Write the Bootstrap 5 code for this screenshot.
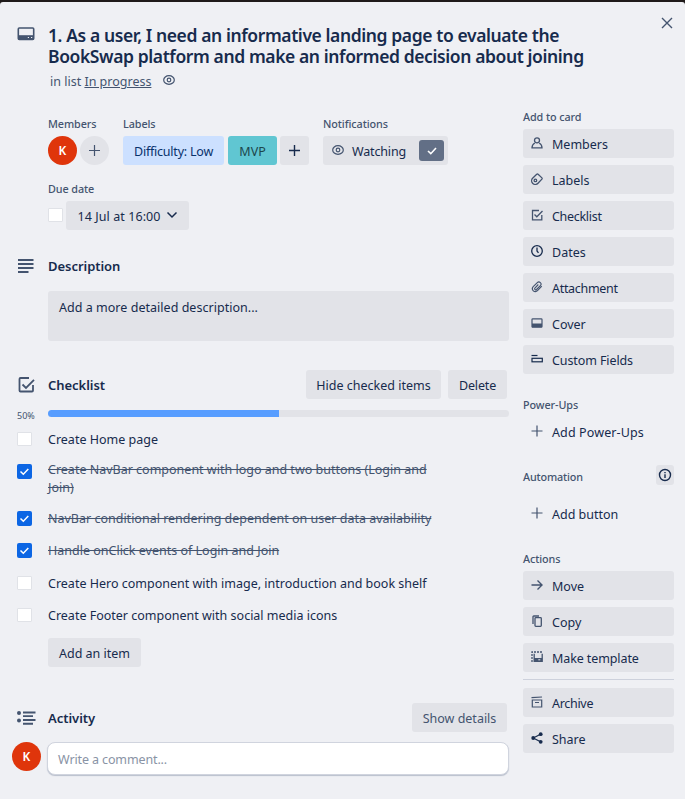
<!DOCTYPE html>
<html lang="en">
<head>
<meta charset="utf-8">
<meta name="viewport" content="width=device-width, initial-scale=1">
<title>Card details</title>
<link href="https://cdn.jsdelivr.net/npm/bootstrap@5.3.0/dist/css/bootstrap.min.css" rel="stylesheet">
<style>
  body { background: #1f1a1a; font: 400 12.5px/18px "Noto Sans", "Open Sans", sans-serif; color: #172b4d; padding-top: 2px; overflow: hidden; }
  .dialog { background: #eff0f4; height: 797px; border-radius: 3px 3px 0 0; padding: 0 11px 0 12px; }
  svg { display: block; flex: none; color: #44546f; fill: none; stroke: currentColor; }
  .solid { fill: currentColor; stroke: none; }
  .dialog-head { height: 109px; padding: 23px 0 0 5px; }
  .dialog-head > svg { margin: 2px 13px 0 0; }
  .card-title-text { font-size: 17.5px; line-height: 21px; font-weight: 600; letter-spacing: -.4px; margin: 0; white-space: nowrap; }
  .card-title-text span { display: block; }
  .in-list { color: #44546f; margin: 6px 0 0 2px; height: 18px; }
  .in-list a { color: inherit; }
  .in-list svg { margin: 1px 0 0 12px; }
  .close-x { background: none; border: 0; padding: 0; margin: -9px 0 0; height: 14px; }
  .main-col { width: 497px; }
  .side-col { width: 151px; }
  .indent { padding-left: 36px; }
  .facts { padding-top: 5px; }
  .fact-members { width: 75px; }
  .fact-labels { width: 200px; }
  .due { padding-top: 16px; }
  .tiny-title { font-size: 10.8px; line-height: 16px; font-weight: 500; color: #44546f; letter-spacing: -.08px; margin: 0; }
  .gray-btn { background: #e2e3e8; color: #172b4d; border: 0; border-radius: 3px; height: 29px; font: inherit; line-height: 18px; padding: 2px 0 0; display: flex; align-items: center; justify-content: center; white-space: nowrap; }
  .gap-3px { gap: 3px; }
  .avatar { width: 29px; height: 29px; border-radius: 50%; background: #df350b; color: #fff; font-weight: 600; font-size: 12px; display: flex; align-items: center; justify-content: center; flex: none; }
  .avatar-add { background: #e2e3e8; }
  .label-blue { background: #cce0ff; color: #09326c; width: 101px; letter-spacing: -.22px; margin-right: 1px; }
  .label-teal { background: #60c6d2; color: #1d474c; width: 49px; }
  .add-label { width: 29px; padding: 0; }
  .watch-btn { width: 125px; padding: 0; }
  .watch-btn > svg { margin: -1px 8px 0 0; }
  .watch-text { letter-spacing: -.15px; padding-top: 2px; }
  .watch-check { background: #626f86; width: 25px; height: 21px; border-radius: 3px; display: flex; align-items: center; justify-content: center; margin: 0 -5px 0 13px; }
  .watch-check svg, .tick.on svg { color: #fff; }
  .due-btn { width: 123px; letter-spacing: .08px; }
  .due-btn svg { margin: -3px 0 0 5px; }
  .due .tick { margin-top: -1px; }
  .tick { width: 15px; height: 14px; background: #fff; border: 1px solid #e0e2e7; flex: none; border-radius: 1px; }
  .tick.on { height: 15px; border: 0; border-radius: 2px; background: #0c66e4; }
  .description { padding-top: 21px; }
  .sect { display: flex; align-items: center; height: 29px; padding-left: 5px; }
  .sect h3 { font-size: 13px; line-height: 18px; font-weight: 600; margin: 0; letter-spacing: -.04px; }
  .sect-icon { width: 31px; flex: none; }
  .desc-box { background: #e2e3e8; border-radius: 3px; height: 50px; margin: 11px 0 29px 36px; padding: 8px 11px; letter-spacing: .03px; }
  .hide-btn { width: 135px; }
  .delete-btn { width: 59px; margin: 0 2px 0 7px; letter-spacing: -.15px; }
  .bar-row { height: 7px; margin-top: 11px; margin-bottom: 14px; }
  .pct { width: 36px; padding: 1px 0 0 5px; font-size: 9px; line-height: 10px; color: #44546f; }
  .progress { height: 7px; background: #e2e3e8; border-radius: 4px; }
  .progress-bar { background: #579dff; }
  .todo { display: flex; align-items: flex-start; padding-left: 5px; white-space: nowrap; height: 32px; }
  .todo .tick { margin: 1px 16px 0 0; }
  .todo-first { height: 30px; }
  .todo-two { height: 49px; }
  .todo-two .tick { margin-top: 3px; }
  .todo-last-done { height: 33px; }
  .todo-end { height: 31px; }
  .done { color: #44546f; text-decoration: line-through; }
  .add-item { width: 93px; }
  .activity { padding-top: 36px; }
  .details-btn { width: 95px; margin-right: 2px; color: #44546f; }
  .comment-row { padding-top: 10px; }
  .comment { height: 33px; background: #fff; border-radius: 8px; border: 1px solid #d0d4de; box-shadow: 0 1px 1px #b9bfcc; color: #8993a5; padding: 8px 10px 6px; width: 463px; margin-left: 6px; letter-spacing: -.12px; }
  .side-btn { width: 100%; justify-content: flex-start; padding: 1px 0 0 8px; margin-bottom: 7px; }
  .side-btn svg { margin: -3px 9px 0 0; }
  .side-btn span { padding-top: 1px; }
  .bare { background: none; }
  .tight span { letter-spacing: -.3px; }
  .slight span { letter-spacing: -.1px; }
  .wide span { letter-spacing: .12px; }
  .first-title { margin: -2px 0 4px; }
  .powerups-title { margin: 23px 0 4px; }
  .automation { padding-top: 12px; height: 46px; }
  .automation h3 { padding-top: 4px; letter-spacing: -.15px; }
  .actions-title { margin: 23px 0 4px; }
  .info-btn { width: 18px; height: 20px; background: #e2e3e8; border-radius: 3px; display: flex; align-items: center; justify-content: center; }
  .info-btn svg, svg.dark { color: #172b4d; }
  .rule { height: 1px; background: #cdd1dc; margin-bottom: 8px; }
</style>
</head>
<body>
<div class="dialog">
  <header class="dialog-head d-flex">
    <svg width="18" height="14" viewBox="0 0 18 14" stroke-width="1.6"><rect x="1.300" y="1" width="15.400" height="11.500" rx="1"/><path class="solid" d="M1 8.200h16v4.300H1z"/><path d="M10.800 10.500h1.200M14 10.500h1.200" stroke="#eff0f4" stroke-width="1.200"/></svg>
    <div class="flex-grow-1">
      <h2 class="card-title-text"><span>1. As a user, I need an informative landing page to evaluate the</span><span>BookSwap platform and make an informed decision about joining</span></h2>
      <div class="in-list d-flex"><span>in list <a href="#">In progress</a></span>
        <svg width="12" height="12" viewBox="0 0 12 12" stroke-width="1.200"><ellipse cx="6" cy="6" rx="5.300" ry="4.300"/><circle cx="6" cy="6" r="1.800"/></svg>
      </div>
    </div>
    <button class="close-x" aria-label="Close"><svg width="14" height="14" viewBox="0 0 14 14" stroke-width="1.400"><path d="M2 2l10 10M12 2L2 12"/></svg></button>
  </header>

  <div class="d-flex justify-content-between">
    <main class="main-col">
      <div class="indent facts d-flex">
        <div class="fact-members">
          <h3 class="tiny-title mb-1">Members</h3>
          <div class="d-flex gap-3px"><span class="avatar">K</span>
            <span class="avatar avatar-add"><svg width="11" height="11" viewBox="0 0 11 11" stroke-width="1.200"><path d="M5.500 0v11M0 5.500h11"/></svg></span></div>
        </div>
        <div class="fact-labels">
          <h3 class="tiny-title mb-1">Labels</h3>
          <div class="d-flex gap-3px"><span class="gray-btn label-blue">Difficulty: Low</span><span class="gray-btn label-teal">MVP</span>
            <button class="gray-btn add-label"><svg class="dark" width="11" height="11" viewBox="0 0 11 11" stroke-width="1.400"><path d="M5.500 0v11M0 5.500h11"/></svg></button></div>
        </div>
        <div>
          <h3 class="tiny-title mb-1">Notifications</h3>
          <button class="gray-btn watch-btn"><svg width="12" height="12" viewBox="0 0 12 12" stroke-width="1.200"><ellipse cx="6" cy="6" rx="5.300" ry="4.300"/><circle cx="6" cy="6" r="1.800"/></svg><span class="watch-text">Watching</span>
            <span class="watch-check"><svg width="10" height="8" viewBox="0 0 10 8" stroke-width="1.600"><path d="M1 4l2.800 2.700L9 1"/></svg></span></button>
        </div>
      </div>
      <div class="indent due">
        <h3 class="tiny-title mb-1">Due date</h3>
        <div class="d-flex align-items-center gap-3px"><span class="tick"></span><button class="gray-btn due-btn"><span>14 Jul at 16:00</span><svg class="dark" width="12" height="8" viewBox="0 0 12 8" stroke-width="1.500"><path d="M1.500 1.500L6 6l4.500-4.500"/></svg></button></div>
      </div>

      <section class="description">
        <div class="sect"><span class="sect-icon"><svg width="17" height="14" viewBox="0 0 17 14" stroke-width="1.800"><path d="M1 1h15.500M1 5h15.500M1 9h15.500M1 13h10.500"/></svg></span><h3>Description</h3></div>
        <div class="desc-box">Add a more detailed description...</div>
      </section>

      <section>
        <div class="sect"><span class="sect-icon"><svg width="18" height="18" viewBox="0 0 18 18" stroke-width="1.800"><path d="M12 2H3.500Q2.500 2 2.500 3v11.500q0 1 1 1h11.500q1 0 1-1V9M5.500 8.500l3.500 3.500L17 3.800"/></svg></span><h3>Checklist</h3>
          <button class="gray-btn hide-btn ms-auto">Hide checked items</button><button class="gray-btn delete-btn">Delete</button></div>
        <div class="bar-row d-flex"><span class="pct">50%</span>
          <div class="progress flex-grow-1"><div class="progress-bar" style="width:50%"></div></div></div>
        <div class="todo todo-first"><span class="tick"></span><span>Create Home page</span></div>
        <div class="todo todo-two"><span class="tick on"><svg width="15" height="15" viewBox="0 0 15 15" stroke-width="1.500"><path d="M3.500 7.500l2.800 2.700 5-5.200"/></svg></span><span class="done">Create NavBar component with logo and two buttons (Login and<br>Join)</span></div>
        <div class="todo"><span class="tick on"><svg width="15" height="15" viewBox="0 0 15 15" stroke-width="1.500"><path d="M3.500 7.500l2.800 2.700 5-5.200"/></svg></span><span class="done">NavBar conditional rendering dependent on user data availability</span></div>
        <div class="todo todo-last-done"><span class="tick on"><svg width="15" height="15" viewBox="0 0 15 15" stroke-width="1.500"><path d="M3.500 7.500l2.800 2.700 5-5.200"/></svg></span><span class="done">Handle onClick events of Login and Join</span></div>
        <div class="todo"><span class="tick"></span><span>Create Hero component with image, introduction and book shelf</span></div>
        <div class="todo todo-end"><span class="tick"></span><span>Create Footer component with social media icons</span></div>
        <div class="indent"><button class="gray-btn add-item">Add an item</button></div>
      </section>

      <section class="activity">
        <div class="sect"><span class="sect-icon"><svg class="solid" width="19" height="14" viewBox="0 0 19 14"><circle cx="2" cy="2" r="2"/><circle cx="2" cy="9.500" r="2"/><path d="M6 .5h12.500v1.900H6zM6 4.200h10v1.900H6zM6 8h12.500v1.900H6zM6 11.800h10v1.900H6z"/></svg></span><h3>Activity</h3>
          <button class="gray-btn details-btn ms-auto">Show details</button></div>
        <div class="comment-row d-flex"><span class="avatar">K</span><div class="comment">Write a comment...</div></div>
      </section>
    </main>

    <aside class="side-col">
      <h3 class="tiny-title first-title">Add to card</h3>
      <button class="gray-btn side-btn"><svg width="12" height="12" viewBox="0 0 12 12" stroke-width="1.300"><circle cx="6" cy="3.300" r="2.500"/><path d="M3.800 6Q1 7.500 1 10.800h10Q11 7.500 8.200 6"/></svg><span>Members</span></button>
      <button class="gray-btn side-btn"><svg width="12" height="12" viewBox="0 0 12 12" stroke-width="1.300"><path d="M1.600 5.200L5.700 1.300q.7-.6 1.400 0L10.900 4.900q.5.600 0 1.200L7 10.200a3.400 3.400 0 0 1-5.400-5z"/><circle cx="4.400" cy="7.400" r="1.300"/></svg><span>Labels</span></button>
      <button class="gray-btn side-btn tight"><svg width="12" height="12" viewBox="0 0 12 12" stroke-width="1.300"><path d="M8 1.500H1.500v9.300h9.300V6M3.500 5.500l2.300 2.300L11.500 2"/></svg><span>Checklist</span></button>
      <button class="gray-btn side-btn"><svg class="dark" width="12" height="12" viewBox="0 0 12 12" stroke-width="1.300"><circle cx="6" cy="6" r="5.300"/><path d="M6 2.500V6l1.500 1.800"/></svg><span>Dates</span></button>
      <button class="gray-btn side-btn tight"><svg width="12" height="12" viewBox="0 0 12 12" stroke-width="1.100"><path d="M10.800 5.200L6.500 9.700a2.900 2.900 0 0 1-4.300-4L6.300 1.600a2.100 2.100 0 0 1 3.100 3L5.500 8.500A1.100 1.100 0 0 1 3.900 7L7.300 3.500"/></svg><span>Attachment</span></button>
      <button class="gray-btn side-btn"><svg width="12" height="12" viewBox="0 0 12 12" stroke-width="1.200"><rect x="1" y="1.800" width="10" height="8.400" rx=".8"/><path class="solid" d="M1 6.500h10v3.700H1z"/></svg><span>Cover</span></button>
      <button class="gray-btn side-btn slight"><svg class="dark" width="12" height="12" viewBox="0 0 12 12" stroke-width="1.200"><path d="M.5 2.500h6"/><rect x="1" y="5.300" width="10.300" height="3.500"/></svg><span>Custom Fields</span></button>

      <h3 class="tiny-title powerups-title">Power-Ups</h3>
      <button class="gray-btn side-btn bare wide"><svg width="12" height="12" viewBox="0 0 12 12" stroke-width="1.200"><path d="M6 .5v11M.5 6h11"/></svg><span>Add Power-Ups</span></button>
      <div class="automation d-flex justify-content-between"><h3 class="tiny-title">Automation</h3>
        <span class="info-btn"><svg width="14" height="14" viewBox="0 0 14 14" stroke-width="1.400"><circle cx="7" cy="7" r="5.500"/><path d="M7 6.200v3.800M7 4v1.300"/></svg></span></div>
      <button class="gray-btn side-btn bare"><svg width="12" height="12" viewBox="0 0 12 12" stroke-width="1.200"><path d="M6 .5v11M.5 6h11"/></svg><span>Add button</span></button>

      <h3 class="tiny-title actions-title">Actions</h3>
      <button class="gray-btn side-btn"><svg width="12" height="12" viewBox="0 0 12 12" stroke-width="1.400"><path d="M.5 6h10.500M6.500 1.500L11 6l-4.500 4.500"/></svg><span>Move</span></button>
      <button class="gray-btn side-btn"><svg width="12" height="12" viewBox="0 0 12 12" stroke-width="1.300"><rect x="4" y="2.700" width="6.300" height="8.600" rx=".8"/><path d="M2 9V1.800Q2 1 2.800 1H8"/></svg><span>Copy</span></button>
      <button class="gray-btn side-btn slight"><svg width="12" height="12" viewBox="0 0 12 12" stroke-width="1.300"><path d="M3.200 2.800v7.500h8V2.800"/><path class="solid" d="M3 7h8.200v3.500H3z"/><path d="M1 11V1h10.500" stroke-dasharray="2 1"/><path d="M7.300 8.800h2" stroke="#e2e3e8" stroke-width="1"/></svg><span>Make template</span></button>
      <div class="rule"></div>
      <button class="gray-btn side-btn tight"><svg width="12" height="12" viewBox="0 0 12 12" stroke-width="1.200"><path d="M.5 1.700L11 1"/><path d="M.7 4h10.600M1.300 4v7h9.400V4M4 6.500h4"/></svg><span>Archive</span></button>
      <button class="gray-btn side-btn"><svg class="dark" width="12" height="12" viewBox="0 0 12 12" stroke-width="1.200"><path d="M9.500 2.200L2.300 6l7.200 3.800"/><g class="solid"><circle cx="9.700" cy="2.200" r="1.900"/><circle cx="2.200" cy="6" r="1.900"/><circle cx="9.700" cy="9.800" r="1.900"/></g></svg><span>Share</span></button>
    </aside>
  </div>
</div>
<script src="https://cdn.jsdelivr.net/npm/bootstrap@5.3.0/dist/js/bootstrap.bundle.min.js"></script>
</body>
</html>
